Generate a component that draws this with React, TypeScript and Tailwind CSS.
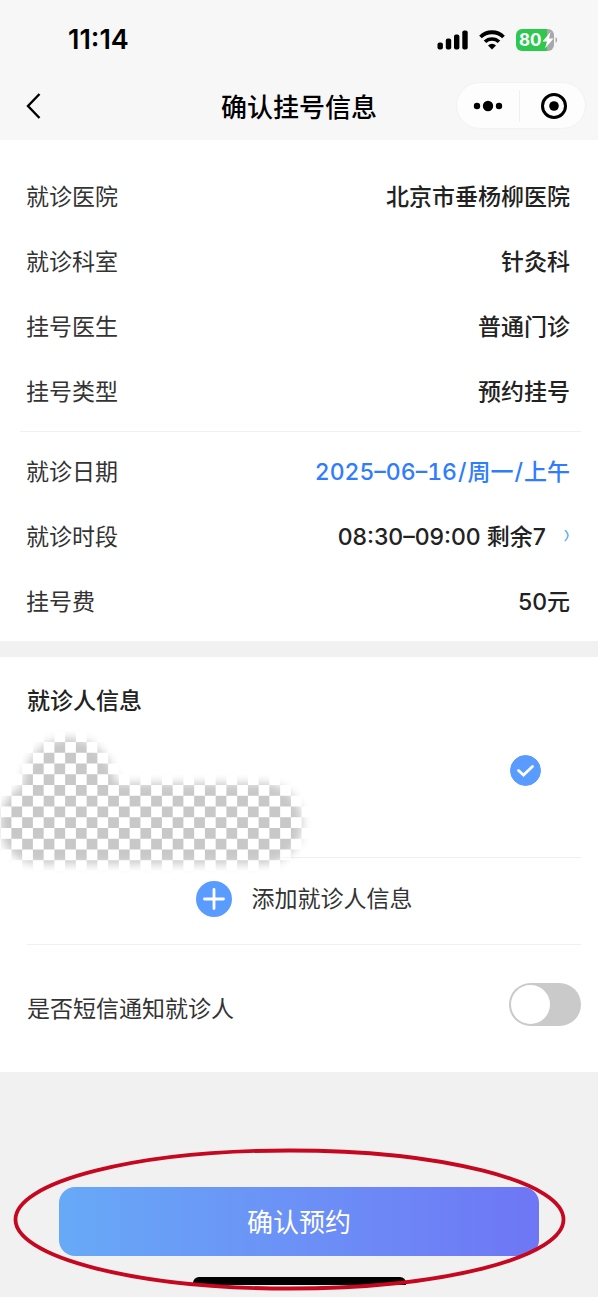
import { useState } from "react";

const visitInfo = [
  { label: "就诊医院", value: "北京市垂杨柳医院" },
  { label: "就诊科室", value: "针灸科" },
  { label: "挂号医生", value: "普通门诊" },
  { label: "挂号类型", value: "预约挂号" },
];

const StatusBar = () => {
  return (
    <div className="flex h-20 items-center justify-between pl-[68px] pr-10">
      <p className="text-[27px] leading-8 font-semibold text-black">11:14</p>
      <div className="flex items-center gap-[11px]">
        <svg width="31" height="20" viewBox="0 0 31 20" fill="#000">
          <rect x="0.500" y="12.500" width="5.400" height="7" rx="2" />
          <rect x="8.800" y="8.500" width="5.400" height="11" rx="2" />
          <rect x="17" y="4.500" width="5.400" height="15" rx="2" />
          <rect x="25.300" y="0.500" width="5.400" height="19" rx="2" />
        </svg>
        <svg width="26" height="20" viewBox="0 0 26 20" fill="none">
          <path d="M1.5 7A16.3 16.3 0 0 1 24.5 7" stroke="#000" strokeWidth="3.8" />
          <path d="M6 11.8a10 10 0 0 1 14 0" stroke="#000" strokeWidth="3.6" />
          <path d="M13 19.5 9 15.4a5.8 5.8 0 0 1 8 0z" fill="#000" />
        </svg>
        <div className="relative flex h-[22px] w-[42px] items-center">
          <svg className="absolute inset-0" width="42" height="22" viewBox="0 0 42 22">
            <path d="M31 0h1a6 6 0 0 1 6 6v10a6 6 0 0 1-6 6h-1z" fill="#a8a8a8" />
            <path d="M6 0h25v22H6a6 6 0 0 1-6-6V6a6 6 0 0 1 6-6z" fill="#2dc84f" />
            <path d="M39.500 8a3.500 3.500 0 0 1 0 6z" fill="#a8a8a8" />
            <path d="M34.500 3 26.500 12.500h4.500L29 19.500l8.500-10H33z" fill="#fff" />
          </svg>
          <span className="relative pl-[3px] text-[17px] leading-[22px] font-bold text-white">80</span>
        </div>
      </div>
    </div>
  );
};

const NavBar = () => {
  return (
    <div className="grid h-15 grid-cols-[1fr_auto_1fr] items-start px-3">
      <button type="button" aria-label="返回" className="flex h-[52px] w-10 items-center pl-[13px]">
        <svg width="16" height="26" viewBox="0 0 16 26" fill="none" stroke="#000" strokeWidth="2.4">
          <path d="M14.500 1 3 13l11.500 12" />
        </svg>
      </button>
      <h1 className="text-[26px] leading-[56px] font-medium text-black">确认挂号信息</h1>
      <div className="mt-[2px] flex h-[47px] w-[130px] items-center justify-self-end rounded-full border border-[#f2f2f2] bg-[#fdfdfd]">
        <button type="button" aria-label="更多" className="flex h-full flex-1 items-center justify-center">
          <svg width="30" height="12" viewBox="0 0 30 12" fill="#000">
            <circle cx="4" cy="6" r="3.200" />
            <circle cx="15" cy="6" r="5.200" />
            <circle cx="26" cy="6" r="3.200" />
          </svg>
        </button>
        <div className="h-8 w-px bg-[#f0f0f0]"></div>
        <button type="button" aria-label="关闭" className="flex h-full flex-1 items-center justify-center pl-1">
          <svg width="28" height="28" viewBox="0 0 28 28">
            <circle cx="14" cy="14" r="11.500" fill="none" stroke="#000" strokeWidth="3" />
            <circle cx="14" cy="14" r="4.800" fill="#000" />
          </svg>
        </button>
      </div>
    </div>
  );
};

const PatientCover = () => {
  return (
    <svg
      className="pointer-events-none absolute top-[63px] left-0"
      width="330"
      height="160"
      viewBox="0 720 330 160"
      aria-hidden="true"
    >
      <defs>
        <pattern id="checker" x="54.400" y="742" width="21.500" height="21.500" patternUnits="userSpaceOnUse">
          <rect width="21.500" height="21.500" fill="#fff" />
          <rect width="10.750" height="10.750" fill="#c8c8c8" />
          <rect x="10.750" y="10.750" width="10.750" height="10.750" fill="#c8c8c8" />
        </pattern>
        <filter id="soft" x="-20%" y="-20%" width="140%" height="140%">
          <feGaussianBlur stdDeviation="5" />
        </filter>
        <mask id="cover" maskUnits="userSpaceOnUse" x="0" y="720" width="330" height="160">
          <g fill="#fff" filter="url(#soft)">
            <circle cx="69" cy="784" r="46" />
            <rect x="0" y="783" width="302" height="81" rx="38" />
          </g>
        </mask>
      </defs>
      <rect y="720" width="330" height="160" fill="url(#checker)" mask="url(#cover)" />
    </svg>
  );
};

const App = () => {
  const [selected, setSelected] = useState(true);
  const [notify, setNotify] = useState(false);

  return (
    <main className="min-h-screen bg-white pr-[2px] font-['Inter','Noto_Sans_CJK_SC',sans-serif] text-[23px] leading-8 text-[#333]">
      <header className="bg-[#f7f7f7]">
        <StatusBar />
        <NavBar />
      </header>

      <section className="pt-6 pb-[7px]">
        <dl className="pr-7 pl-[26px]">
          {visitInfo.map((item) => (
            <div key={item.label} className="flex h-[65px] items-center justify-between">
              <dt>{item.label}</dt>
              <dd className="font-medium text-[#222]">{item.value}</dd>
            </div>
          ))}
        </dl>
        <hr className="my-[7px] mr-[17px] ml-5 border-[#f0f0f0]" />
        <dl className="pr-7 pl-[26px]">
          <div className="flex h-[65px] items-center justify-between">
            <dt>就诊日期</dt>
            <dd className="flex gap-px font-medium text-[#2f7cff] tabular-nums">
              <span>2025–06–16</span>
              <span>/</span>
              <span>周一</span>
              <span>/</span>
              <span>上午</span>
            </dd>
          </div>
          <div className="flex h-[65px] items-center justify-between">
            <dt>就诊时段</dt>
            <dd>
              <button type="button" className="flex items-center gap-[18px] font-medium text-[#222]">
                08:30–09:00 剩余7
                <svg width="6" height="14" viewBox="0 0 6 14" fill="none" stroke="#62b2ff" strokeWidth="1.600">
                  <path d="M1 0q3 3 3 5.500T1 11" />
                </svg>
              </button>
            </dd>
          </div>
          <div className="flex h-[65px] items-center justify-between">
            <dt>挂号费</dt>
            <dd className="font-medium text-[#222]">50元</dd>
          </div>
        </dl>
      </section>

      <div className="h-4 bg-[#f1f1f1]"></div>

      <section className="relative pt-7 pr-[17px] pl-[27px]">
        <h2 className="font-medium text-[#222]">就诊人信息</h2>
        <div className="flex h-[141px] items-start justify-end border-b border-[#f0f0f0] pt-[38px] pr-10">
          <label className="relative flex">
            <input
              type="checkbox"
              aria-label="选择就诊人"
              checked={selected}
              onChange={() => setSelected(!selected)}
              className="h-[31px] w-[31px] appearance-none rounded-full border border-gray-300 checked:border-[#5a9bff] checked:bg-[#5a9bff]"
            />
            <svg
              className="pointer-events-none absolute inset-0"
              width="31"
              height="31"
              viewBox="0 0 31 31"
              fill="none"
              stroke="#fff"
              strokeWidth="2.800"
              strokeLinecap="round"
            >
              <path d="m8.500 15.500 5 4.500 9-8.500" />
            </svg>
          </label>
        </div>
        <PatientCover />
        <button
          type="button"
          className="flex h-[87px] w-full items-center justify-center gap-5 border-b border-[#f0f0f0] pb-1"
        >
          <svg width="36" height="36" viewBox="0 0 36 36">
            <circle cx="18" cy="18" r="18" fill="#5a9bff" />
            <path d="M18 8.500v19M8.500 18h19" stroke="#fff" strokeWidth="2.800" strokeLinecap="round" />
          </svg>
          添加就诊人信息
        </button>
        <div className="flex h-[127px] items-center justify-between">
          <label htmlFor="notify">是否短信通知就诊人</label>
          <input
            id="notify"
            type="checkbox"
            role="switch"
            checked={notify}
            onChange={() => setNotify(!notify)}
            className="mb-2 flex h-[43px] w-[72px] appearance-none items-center rounded-full bg-[#cacaca] px-[2px] before:h-[39px] before:w-[39px] before:rounded-full before:bg-white checked:justify-end checked:bg-[#5a9bff]"
          />
        </div>
      </section>

      <footer className="relative flex flex-col items-center bg-[#f1f1f1] px-[59px] pt-[115px] pb-3">
        <button
          type="button"
          className="h-[69px] w-full rounded-2xl bg-linear-to-r from-[#67a9f7] to-[#6e76f5] pt-[2px] text-[26px] text-white"
        >
          确认预约
        </button>
        <div className="mt-[21px] h-2 w-[213px] rounded-t-md bg-black"></div>
        <svg
          className="pointer-events-none absolute top-[75px] left-[13px]"
          width="553"
          height="144"
          viewBox="0 0 553 144"
          fill="none"
          aria-hidden="true"
        >
          <ellipse cx="276.500" cy="72.500" rx="274" ry="69" stroke="#c5081f" strokeWidth="3.800" />
        </svg>
      </footer>
    </main>
  );
};

export default App;
